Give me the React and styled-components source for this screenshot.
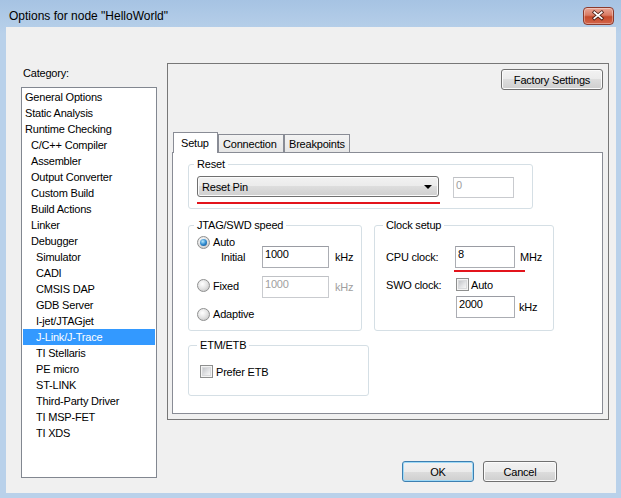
import React from 'react';
import styled, { createGlobalStyle, css } from 'styled-components';

const Global = createGlobalStyle`
  html, body { margin: 0; padding: 0; }
  body {
    width: 621px; height: 498px; overflow: hidden;
    font-family: "Liberation Sans", Arial, sans-serif;
    font-size: 11px; letter-spacing: -0.2px; color: #000;
  }
  * { box-sizing: border-box; }
`;

const Window = styled.div`
  width: 621px; height: 498px;
  background: linear-gradient(#a6c3e3 0px, #b9d1ea 34px);
  display: flex; flex-direction: column;
  padding: 0 5px 5px 6px;
`;

const TitleBar = styled.div`
  height: 27px; flex: none;
  display: flex; align-items: center;
  padding: 4px 2px 0 3px;
`;

const Title = styled.div`
  flex: 1;
  font-size: 12px; letter-spacing: 0; color: #000;
`;

const CloseBtn = styled.div`
  width: 31px; height: 18px;
  border: 1px solid #8b3b2d; border-radius: 4px;
  background: linear-gradient(#e9a797 0%, #d97a63 45%, #c54a2b 55%, #d3644a 100%);
  box-shadow: inset 0 0 0 1px rgba(255,255,255,0.35);
  display: flex; align-items: center; justify-content: center;
`;

const Client = styled.div`
  flex: 1;
  background: #f0f0f0;
  display: flex;
  gap: 10px;
  padding: 36px 7px 0 15px;
`;

const LeftCol = styled.div`
  width: 136px; flex: none;
  display: flex; flex-direction: column;
`;

const CategoryLabel = styled.div`
  margin: 3px 0 7px 2px;
  height: 14px; line-height: 14px;
`;

const ListBox = styled.ul`
  margin: 0; list-style: none;
  height: 391px;
  border: 1px solid #828790;
  background: #fff;
  padding: 1px;
`;

const Item = styled.li`
  height: 16px; line-height: 16px;
  white-space: nowrap;
  padding-left: ${p => [2, 8, 13][p.$level]}px;
  ${p => p.$selected && css`
    background: #3399ff; color: #fff;
  `}
`;

const RightCol = styled.div`
  flex: 1;
  display: flex; flex-direction: column;
`;

const Panel = styled.div`
  height: 357px;
  border: 1px solid #777;
  padding: 5px 5px 5px 4px;
  display: flex; flex-direction: column;
`;

const TopRow = styled.div`
  display: flex; justify-content: flex-end;
  margin-bottom: 42px;
`;

const Button = styled.button`
  font: inherit; letter-spacing: inherit; color: #000;
  width: ${p => p.$w}px; height: 21px; padding: 0;
  border: 1px solid ${p => (p.$default ? '#3c7fb1' : '#707070')};
  border-radius: 3px;
  background: linear-gradient(#f2f2f2 0%, #ebebeb 50%, #dddddd 50%, #cfcfcf 100%);
  box-shadow: inset 0 0 0 1px ${p => (p.$default ? '#9fd9f6' : '#fbfbfb')};
`;

const TabStrip = styled.div`
  height: 20px;
  display: flex; align-items: flex-end;
  padding-left: 1px;
  position: relative; z-index: 1;
`;

const Tab = styled.div`
  width: ${p => p.$w}px;
  border: 1px solid #898c95; border-bottom: none;
  display: flex; align-items: center;
  ${p => p.$active ? css`
    height: 21px; margin-bottom: -1px;
    background: #fff;
    padding-left: 7px;
  ` : css`
    height: 18px;
    background: linear-gradient(#f3f3f3, #e6e6e6);
    padding-left: 4px;
  `}
`;

const Page = styled.div`
  height: 262px;
  border: 1px solid #898c95;
  background: #fff;
  padding: 4px 0 0 15px;
  display: flex; flex-direction: column; align-items: flex-start;
`;

const Group = styled.fieldset`
  margin: ${p => p.$mt || 0}px 0 0 0;
  min-width: 0;
  width: ${p => p.$w}px;
  border: 1px solid #d5dfe5;
  border-radius: 3px;
  padding: ${p => p.$pt || 0}px 0 ${p => p.$pb || 0}px ${p => p.$pl || 8}px;
  display: flex; flex-direction: column; align-items: flex-start;
`;

const Legend = styled.legend`
  padding: 0 3px; margin-left: -3px;
  line-height: 14px; height: 14px;
`;

const Row = styled.div`
  display: flex; align-items: center;
  height: ${p => p.$h}px;
  margin-top: ${p => p.$mt || 0}px;
  margin-left: ${p => p.$ml || 0}px;
  gap: ${p => p.$gap || 0}px;
  white-space: nowrap;
`;

const Combo = styled.div`
  width: 242px; height: 21px;
  border: 1px solid #707070; border-radius: 3px;
  background: linear-gradient(#f2f2f2 0%, #ebebeb 50%, #dddddd 50%, #cfcfcf 100%);
  box-shadow: inset 0 0 0 1px #fbfbfb;
  display: flex; align-items: center; justify-content: space-between;
  padding: 0 6px 0 4px;
`;

const Arrow = styled.span`
  width: 0; height: 0;
  border-left: 4px solid transparent;
  border-right: 4px solid transparent;
  border-top: 4px solid #000;
`;

const Field = styled.div`
  width: ${p => p.$w}px; height: ${p => p.$h || 22}px;
  margin-top: ${p => p.$mt || 0}px;
  border: 1px solid ${p => (p.$disabled ? '#c9cbcf' : '#abadb3')};
  border-top-color: ${p => (p.$disabled ? '#bfc1c5' : '#9a9ca3')};
  background: #fff;
  padding: 0 2px; line-height: 14px;
  color: ${p => (p.$disabled ? '#a0a0a0' : '#000')};
  align-self: flex-start;
`;

const Label = styled.span`
  width: ${p => p.$w}px; flex: none;
  padding-left: ${p => p.$pl || 0}px;
  color: ${p => (p.$disabled ? '#a0a0a0' : '#000')};
`;

const RadioLabel = styled(Label)`
  display: flex; align-items: center;
  margin-top: -3px;
`;

const Unit = styled.span`
  margin-left: ${p => p.$ml || 0}px;
  color: ${p => (p.$disabled ? '#a0a0a0' : '#000')};
`;

const RedLine = styled.div`
  width: ${p => p.$w}px; height: 2px;
  background: #e3141c;
  margin-top: ${p => p.$mt || 0}px;
  margin-left: ${p => p.$ml || 0}px;
`;

const Radio = styled.span`
  width: 13px; height: 13px; flex: none;
  border-radius: 50%;
  border: 1px solid #8e8f8f;
  background: radial-gradient(circle at 40% 35%, #ffffff 0%, #e6e6e6 45%, #bdbdbd 100%);
  display: inline-flex; align-items: center; justify-content: center;
  margin-right: 3px;
  &::after {
    content: '';
    display: ${p => (p.$checked ? 'block' : 'none')};
    width: 7px; height: 7px; border-radius: 50%;
    background: radial-gradient(circle at 40% 35%, #b8e8fc 0%, #2f8bd0 50%, #0f3f7a 100%);
  }
`;

const Check = styled.span`
  width: 13px; height: 13px; flex: none;
  border: 1px solid #8e8f8f;
  background: #f4f4f4;
  padding: 2px;
  margin-right: ${p => p.$mr || 3}px;
  &::after {
    content: ''; display: block; width: 100%; height: 100%;
    background: linear-gradient(135deg, #c4c6ca 0%, #e4e5e7 60%, #f6f6f6 100%);
    outline: 1px solid #d9dadc;
  }
`;

const ComboRow = styled(Row)`
  align-items: flex-start;
`;

const GroupRow = styled(Row)`
  align-items: stretch;
`;

const Footer = styled.div`
  display: flex; justify-content: flex-end;
  gap: 9px;
  margin-top: 41px;
  padding-right: 52px;
`;

const categories = [
  ['General Options', 0], ['Static Analysis', 0], ['Runtime Checking', 0],
  ['C/C++ Compiler', 1], ['Assembler', 1], ['Output Converter', 1],
  ['Custom Build', 1], ['Build Actions', 1], ['Linker', 1], ['Debugger', 1],
  ['Simulator', 2], ['CADI', 2], ['CMSIS DAP', 2], ['GDB Server', 2],
  ['I-jet/JTAGjet', 2], ['J-Link/J-Trace', 2], ['TI Stellaris', 2],
  ['PE micro', 2], ['ST-LINK', 2], ['Third-Party Driver', 2],
  ['TI MSP-FET', 2], ['TI XDS', 2],
];

export default function App() {
  return (
    <>
      <Global />
      <Window>
        <TitleBar>
          <Title>Options for node "HelloWorld"</Title>
          <CloseBtn>
            <svg width="31" height="18" viewBox="0 0 31 18">
              <g strokeLinecap="square">
                <path d="M11 5 L19 11.5 M19 5 L11 11.5" stroke="#4a1f16" strokeWidth="3.6" />
                <path d="M11 5 L19 11.5 M19 5 L11 11.5" stroke="#fff" strokeWidth="1.8" />
              </g>
            </svg>
          </CloseBtn>
        </TitleBar>
        <Client>
          <LeftCol>
            <CategoryLabel>Category:</CategoryLabel>
            <ListBox>
              {categories.map(([name, level]) => (
                <Item key={name} $level={level} $selected={name === 'J-Link/J-Trace'}>{name}</Item>
              ))}
            </ListBox>
          </LeftCol>
          <RightCol>
            <Panel>
              <TopRow>
                <Button $w={102}>Factory Settings</Button>
              </TopRow>
              <TabStrip>
                <Tab $w={45} $active>Setup</Tab>
                <Tab $w={66}>Connection</Tab>
                <Tab $w={66}>Breakpoints</Tab>
              </TabStrip>
              <Page>
                <Group $w={345} $pt={5} $pb={4} $pl={8}>
                  <Legend>Reset</Legend>
                  <ComboRow $h={22} $gap={14}>
                    <Combo>
                      <span>Reset Pin</span>
                      <Arrow />
                    </Combo>
                    <Field $w={61} $h={21} $mt={1} $disabled>0</Field>
                  </ComboRow>
                  <RedLine $w={243} $mt={4} />
                </Group>
                <GroupRow $h={113} $mt={9} $gap={12}>
                  <Group $w={174} $pl={8}>
                    <Legend>JTAG/SWD speed</Legend>
                    <Row $h={12} $mt={4}>
                      <Radio $checked />Auto
                    </Row>
                    <Row $h={22} $mt={-2}>
                      <Label $w={65} $pl={24}>Initial</Label>
                      <Field $w={67}>1000</Field>
                      <Unit $ml={6}>kHz</Unit>
                    </Row>
                    <Row $h={22} $mt={8}>
                      <RadioLabel $w={65}>
                        <Radio />Fixed
                      </RadioLabel>
                      <Field $w={67} $disabled>1000</Field>
                      <Unit $ml={6} $disabled>kHz</Unit>
                    </Row>
                    <Row $h={14} $mt={9}>
                      <Radio />Adaptive
                    </Row>
                  </Group>
                  <Group $w={180} $pl={11}>
                    <Legend>Clock setup</Legend>
                    <Row $h={22} $mt={14}>
                      <Label $w={69}>CPU clock:</Label>
                      <Field $w={60}>8</Field>
                      <Unit $ml={5}>MHz</Unit>
                    </Row>
                    <RedLine $w={71} $mt={2} $ml={68} />
                    <Row $h={13} $mt={6}>
                      <Label $w={70}>SWO clock:</Label>
                      <Check $mr={2} />Auto
                    </Row>
                    <Row $h={22} $mt={5} $ml={70}>
                      <Field $w={59}>2000</Field>
                      <Unit $ml={4}>kHz</Unit>
                    </Row>
                  </Group>
                </GroupRow>
                <Group $w={181} $mt={7} $pl={11} $pb={17}>
                  <Legend>ETM/ETB</Legend>
                  <Row $h={13} $mt={13}>
                    <Check />Prefer ETB
                  </Row>
                </Group>
              </Page>
            </Panel>
            <Footer>
              <Button $w={72} $default>OK</Button>
              <Button $w={74}>Cancel</Button>
            </Footer>
          </RightCol>
        </Client>
      </Window>
    </>
  );
}
